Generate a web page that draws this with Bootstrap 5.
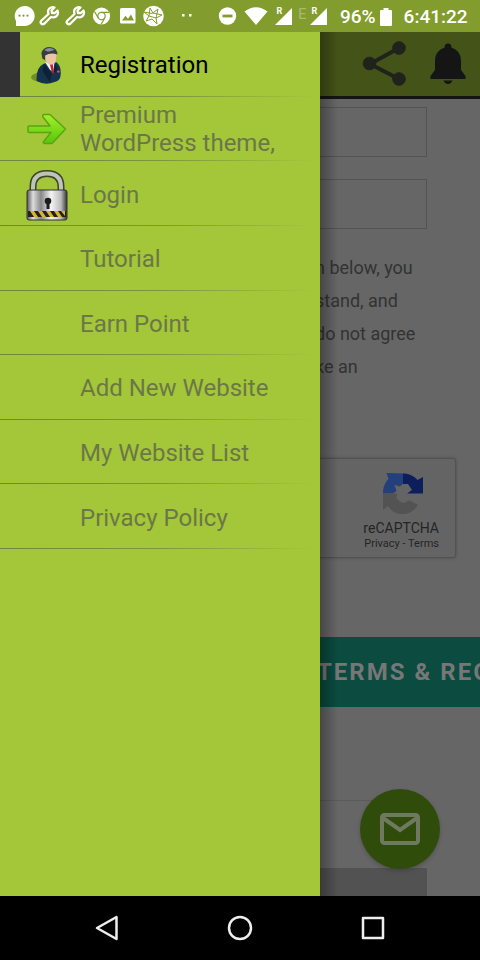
<!DOCTYPE html>
<html lang="en">
<head>
<meta charset="utf-8">
<meta name="viewport" content="width=device-width, initial-scale=1">
<title>Registration</title>
<link href="https://cdn.jsdelivr.net/npm/bootstrap@5.3.0/dist/css/bootstrap.min.css" rel="stylesheet">
<style>
body { font-family: Roboto, "Liberation Sans", sans-serif; background: #666; color: #333; }
svg { display: block; flex: none; }
.status-bar { height: 32px; background: #839c2e; color: #fff; font-size: 19px; font-weight: 500; line-height: 32px; padding-top: 2px; }
.status-time { margin-left: 12px; }
.app-bar { height: 67px; background: #445317; border-bottom: 3px solid #141414; padding: 4px 12px 0 0; gap: 16px; }
.app-bar .btn { --bs-btn-padding-x: 0; --bs-btn-padding-y: 0; border: 0; }
.form-area { padding: 8px 53px 0; }
.field { height: 50px; margin-bottom: 22px; background: #666; border: 1px solid #535353; border-radius: 0; }
.terms-text { margin: 0 0 75px; padding: 0 0 0 262px; font-size: 18px; line-height: 33px; color: #333; }
.terms-text span { display: block; white-space: nowrap; }
.captcha-box { height: 100px; margin: 0 24px 79px 53px; padding: 14px 16px 0; background: #646464; border: 1px solid #525252; border-radius: 3px; box-shadow: 0 0 3px #4a4a4a; line-height: 16px; font-size: 11px; color: #242424; }
.captcha-name { font-size: 14px; margin-top: 6px; }
.captcha-box a { color: inherit; text-decoration: none; }
.submit-btn { height: 70px; padding: 0 0 0 317px; border: 0; background: #0b4b40; color: #777; font-size: 24px; font-weight: 700; letter-spacing: 2px; overflow: hidden; white-space: nowrap; text-align: left; }
.rule { margin: 93px 53px 67px; height: 1px; background: #5b5b5b; }
.footer-block { margin: 0 53px; background: #525252; }
.fab { position: absolute; right: 40px; bottom: 27px; width: 80px; height: 80px; padding: 0; border: 0; border-radius: 50%; background: #304c0b; box-shadow: 0 2px 4px rgba(0,0,0,.2); }
.drawer { position: absolute; top: 0; bottom: 0; left: 0; width: 320px; background: #a4c639; }
.drawer::after { content: ""; position: absolute; top: 0; bottom: 0; left: 100%; width: 18px; background: linear-gradient(to right, rgba(0,0,0,.3), rgba(0,0,0,0)); }
.drawer-list { display: grid; grid-auto-rows: 1fr; height: 517px; }
.drawer-item { padding: 2px 28px 0 20px; font-size: 24px; line-height: 28px; color: #6c7748; text-decoration: none; background: linear-gradient(to right, #718443 0, #7e9440 50%, #a4c639 98%) bottom / 100% 1px no-repeat; }
.drawer-item.current { color: #000; border-left: 20px solid #333; padding-left: 0; }
.item-icon { width: 60px; flex: none; display: flex; justify-content: center; padding-right: 6px; }
.current .item-icon { padding-right: 4px; }
.system-nav { height: 64px; background: #000; padding: 0 40px; }
.system-nav .btn { --bs-btn-padding-x: 0; --bs-btn-padding-y: 0; border: 0; width: 133px; display: flex; justify-content: center; }
</style>
<script src="https://cdn.jsdelivr.net/npm/bootstrap@5.3.0/dist/js/bootstrap.bundle.min.js"></script>
</head>
<body class="d-flex flex-column min-vh-100">
<header class="status-bar d-flex align-items-center">
<svg width="340" height="32" viewBox="0 1 340 32" fill="#fff" aria-hidden="true">
<path d="M16 26V21A10 10 0 1 1 24 26Z"/>
<g fill="#839c2e"><circle cx="19.500" cy="15.700" r="1.100"/><circle cx="23.500" cy="15.700" r="1.100"/><circle cx="27.500" cy="15.700" r="1.100"/></g>
<g id="wrench" fill="none" stroke="#fff" stroke-width="2.300" stroke-linejoin="round"><path d="M41.500 20.500L48.500 14Q47 9 51 7.500Q53 6.800 54.500 7.500L51.500 10.500L52 13L54.800 13L57.500 10.500Q59 14 56 16.500Q54 18 51 17L44.500 23.500Q42.500 25 41.200 23.500T41.500 20.500Z"/></g>
<use href="#wrench" x="26"/>
<circle cx="101.500" cy="16" r="8.600"/>
<g fill="none" stroke="#839c2e" stroke-width="1.200"><circle cx="101.500" cy="16" r="3.700"/><path d="M101.500 12.300H109M98.300 18L94.500 11.500M104.700 18L101 24.500"/></g>
<rect x="120" y="8" width="15.500" height="15.500" rx="1.500"/>
<path fill="#839c2e" d="M122 20.500L125.500 15.800L128 18.800L131 14.500L134 20.500Z"/>
<circle cx="153.500" cy="16" r="10.300"/>
<path fill="none" stroke="#839c2e" stroke-width="1" d="M150 8L153 13L162 15L156 18L157 24L152 19L146 21L149 16L144 12L152 13.500L158 9L156 18L149 16Z"/>
<rect x="182" y="14" width="2.500" height="2.500"/><rect x="189" y="14" width="2.500" height="2.500"/>
<circle cx="227.500" cy="16" r="8.700"/><rect x="222.500" y="14.600" width="10" height="2.800" fill="#839c2e"/>
<path d="M244.500 11.500Q256 3 267.500 11.500L256 25Z"/>
<path d="M275 25L292 8V25ZM310 25L327 8V25Z"/>
<g fill="#839c2e"><path d="M274 6h10v10h-10zM309 6h10v10h-10z"/></g>
<g font-family="Roboto,sans-serif" font-size="9" font-weight="700"><text x="276.500" y="13.500">R</text><text x="311.500" y="13.500">R</text><text x="298" y="18.500" font-size="15" font-weight="400" fill="#a9b96f">E</text></g>
</svg>
<span>96%</span>
<svg class="ms-1" width="12" height="20" viewBox="0 0 12 20" fill="#fff" aria-hidden="true"><path d="M3.500 1h5v2H11q1 0 1 1v14q0 1-1 1H1q-1 0-1-1V4q0-1 1-1h2.500Z"/></svg>
<span class="status-time">6:41:22</span>
</header>

<div class="position-relative flex-fill d-flex flex-column overflow-hidden">
<main class="flex-fill d-flex flex-column">
<div class="app-bar d-flex justify-content-end align-items-start">
<button class="btn" type="button" aria-label="Share"><svg width="56" height="56" viewBox="0 0 56 56" fill="#20231c" stroke="#20231c"><path fill="none" stroke-width="4" d="M43 12L14 28L43 43"/><circle cx="43" cy="12" r="6.300"/><circle cx="13.500" cy="27.500" r="6.300"/><circle cx="43" cy="43" r="6.300"/></svg></button>
<button class="btn" type="button" aria-label="Notifications"><svg width="40" height="56" viewBox="0 0 40 56" fill="#151515"><path d="M20 7.500a3.500 3.500 0 0 1 3.500 4.200C29.500 13.500 33 18 33 25V34L37.500 40V43H2.500V40L7 34V25C7 18 10.500 13.500 16.500 11.700A3.500 3.500 0 0 1 20 7.500ZM15.500 44.500H24.500Q23 48 20 48T15.500 44.500Z"/></svg></button>
</div>
<div class="form-area">
<input class="form-control field" type="text" aria-label="Email">
<input class="form-control field" type="password" aria-label="Password">
<p class="terms-text"><span>n below, you</span><span>stand, and</span><span>do not agree</span><span>ke an</span></p>
</div>
<div class="captcha-box d-flex flex-column align-items-end">
<svg class="me-3" width="40" height="41" viewBox="0 0 40 41"><path fill="#23407a" d="M0 20.500C0 14 2 9.500 5.500 6L3.500 0L20 .5V11L16 14L11.500 12L13.500 18L10 20.500Z"/><path fill="#0c1f5c" d="M20 .5C26 .5 31 3 34.500 7L40 4V20.500H24L28 16L25 12L20 17Z"/><path fill="#535353" d="M0 20.500H13.500L16 28Q22 32 26 27L35 32C31 38 26 41 20 41C13 41 8 38 5 33L0 37Z"/><path fill="#646464" d="M12 12L18 14L20 11H25L29 17L24 20.500L27 27L20 30L13 25L15 20Z"/></svg>
<div class="captcha-name">reCAPTCHA</div>
<div><a href="#">Privacy</a> - <a href="#">Terms</a></div>
</div>
<button class="submit-btn w-100" type="submit">TERMS &amp; REGISTER</button>
<div class="rule"></div>
<div class="footer-block flex-fill"></div>
</main>

<button class="fab d-flex align-items-center justify-content-center" type="button" aria-label="Send mail"><svg width="42" height="34" viewBox="0 0 42 34" fill="none" stroke="#6f795f" stroke-width="4"><rect x="3" y="3" width="36" height="28" rx="2.500"/><path d="M4 6L21 18L38 6"/></svg></button>

<nav class="drawer" aria-label="Main menu">
<div class="drawer-list">
<a class="drawer-item current d-flex align-items-center" href="#"><span class="item-icon"><svg width="34" height="40" viewBox="0 0 36 42"><ellipse cx="11" cy="34" rx="11" ry="5" fill="#718f25"/><path fill="#15334d" d="M6 38Q5 24 13 20L18 18L27 18Q33 23 31 34Q30 38 25 39Q15 43 6 38Z"/><path fill="#eee" d="M15 18L25 17L24 29L20 26Z"/><path fill="#b72535" d="M20 20L23 20L25 31L22 29Z"/><path fill="#0c2236" d="M14 20L22 30L20 39L12 27ZM25 19L24 31L28 25Z"/><path fill="#eac4a4" d="M13 9Q22 5 27 10L26 18Q22 23 17 19Z"/><path fill="#363d43" d="M11 8Q13 2 20 2Q28 3 28 10Q21 7 15 11L15 16L12 14Z"/><path fill="#85909a" d="M14 5Q20 1 25 5L18 7Z"/><circle cx="29" cy="28" r="1.300" fill="#d85b62"/></svg></span><span>Registration</span></a>
<a class="drawer-item d-flex align-items-center pt-0" href="#"><span class="item-icon"><svg width="40" height="32" viewBox="0 0 40 32"><defs><linearGradient id="ag" x2="0" y2="1"><stop stop-color="#a4f02a"/><stop offset="1" stop-color="#55c60a"/></linearGradient></defs><path fill="url(#ag)" stroke="#5aa512" stroke-width="1.500" stroke-linejoin="round" d="M2 13H23L16 4Q15 2 17 1.500H23L38.500 16L25 30.500H18Q15 30 17 28L24 19.500H2Q1 19.500 1 18V14Q1 13 2 13Z"/></svg></span><span>Premium WordPress theme,</span></a>
<a class="drawer-item d-flex align-items-center" href="#"><span class="item-icon"><svg width="42" height="52" viewBox="0 0 42 52"><defs><linearGradient id="lg"><stop stop-color="#555"/><stop offset=".15" stop-color="#ddd"/><stop offset=".35" stop-color="#888"/><stop offset=".6" stop-color="#f4f4f4"/><stop offset=".85" stop-color="#bbb"/><stop offset="1" stop-color="#333"/></linearGradient></defs><path fill="none" stroke="#3c432f" stroke-width="7" d="M7 25V18Q7 4.500 21 4.500T35 18V25"/><path fill="none" stroke="#bfc5b5" stroke-width="4" d="M7 25V18Q7 4.500 21 4.500T35 18V25"/><rect x="1" y="21" width="40" height="30" rx="2" fill="url(#lg)" stroke="#333"/><rect x="2" y="42" width="38" height="6" fill="#222"/><path fill="#d9b52c" d="M4 42h4l4 6H8zM12 42h4l4 6h-4zM20 42h4l4 6h-4zM28 42h4l4 6h-4zM35 42h4v5z"/><circle cx="22" cy="32" r="3.300" fill="#1c1c1c"/><path fill="#1c1c1c" d="M20.500 32h3v8h-3z"/></svg></span><span>Login</span></a>
<a class="drawer-item d-flex align-items-center" href="#"><span class="item-icon"></span><span>Tutorial</span></a>
<a class="drawer-item d-flex align-items-center" href="#"><span class="item-icon"></span><span>Earn Point</span></a>
<a class="drawer-item d-flex align-items-center" href="#"><span class="item-icon"></span><span>Add New Website</span></a>
<a class="drawer-item d-flex align-items-center" href="#"><span class="item-icon"></span><span>My Website List</span></a>
<a class="drawer-item d-flex align-items-center" href="#"><span class="item-icon"></span><span>Privacy Policy</span></a>
</div>
</nav>
</div>

<footer class="system-nav d-flex align-items-center justify-content-center">
<button class="btn" type="button" aria-label="Back"><svg width="26" height="26" viewBox="0 0 26 26" fill="none" stroke="#eee" stroke-width="2.500" stroke-linejoin="round"><path d="M22.500 2V24L3 13Z"/></svg></button>
<button class="btn" type="button" aria-label="Home"><svg width="26" height="26" viewBox="0 0 26 26" fill="none" stroke="#eee" stroke-width="2.500"><circle cx="13" cy="13" r="11"/></svg></button>
<button class="btn" type="button" aria-label="Recent apps"><svg width="26" height="26" viewBox="0 0 26 26" fill="none" stroke="#eee" stroke-width="2.500" stroke-linejoin="round"><rect x="3" y="3" width="20" height="20"/></svg></button>
</footer>
</body>
</html>
